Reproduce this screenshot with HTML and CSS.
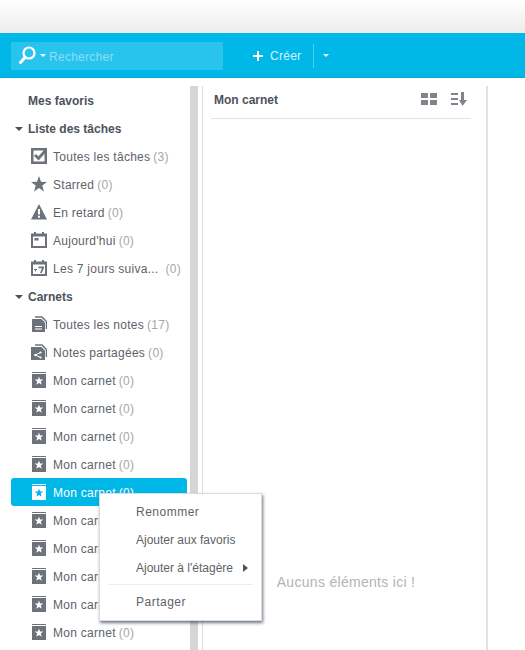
FILE: index.html
```html
<!DOCTYPE html>
<html lang="fr">
<head>
  <meta charset="UTF-8">
  <title>Mon carnet</title>
  <link rel="stylesheet" href="styles.css">
</head>
<body>
<svg class="defs" width="0" height="0">
  <symbol id="i-book" viewBox="0 0 16 16">
    <path d="M1 0h14v1H1zM1 2h14v14H1z" fill="currentColor"/>
    <path d="M8 4.500l1.100 3 3.200.1-2.500 2 .9 3.100L8 10.900l-2.700 1.800.9-3.100-2.500-2 3.200-.1z" fill="var(--star, #fff)"/>
  </symbol>
</svg>

<div class="topbar"></div>

<header class="appbar">
  <div class="search">
    <svg class="search-icon" width="17" height="19" viewBox="0 0 17 19"><circle cx="10" cy="7" r="5.500" fill="none" stroke="#fff" stroke-width="2.200"/><path d="M6 11.500L1.500 16.500" stroke="#fff" stroke-width="3" stroke-linecap="round"/></svg>
    <span class="caret caret-white"></span>
    <span class="search-text">Rechercher</span>
  </div>
  <div class="create">
    <svg width="10" height="10" viewBox="0 0 10 10"><path d="M4 0h2v4h4v2H6v4H4V6H0V4h4z" fill="#fff"/></svg>
    <span>Créer</span>
  </div>
  <span class="appbar-sep"></span>
  <span class="caret caret-white"></span>
</header>

<main class="layout">
  <aside class="sidebar">
    <nav class="tree">
      <div class="heading heading-plain">Mes favoris</div>

      <div class="heading"><span class="caret"></span>Liste des tâches</div>
      <div class="row">
        <svg class="ico" viewBox="0 0 16 16"><path d="M0 0h16v16H0z" fill="#6d727a"/><path d="M2.500 2.500h11v11h-11z" fill="#fff"/><path d="M4 7l3.500 3.500L14.500 2.500" fill="none" stroke="#6d727a" stroke-width="2.800"/></svg>
        <span class="label">Toutes les tâches</span><span class="count">(3)</span>
      </div>
      <div class="row">
        <svg class="ico" viewBox="0 0 16 16"><path d="M8 0l2 5.700 6 .2-4.700 3.700 1.700 5.900L8 12.100 3 15.500l1.700-5.900L0 5.900l6-.2z" fill="#6d727a"/></svg>
        <span class="label">Starred</span><span class="count">(0)</span>
      </div>
      <div class="row">
        <svg class="ico" viewBox="0 0 16 16"><path d="M8 0L16 15.500H0z" fill="#6d727a"/><path d="M7 5h2v5.500H7zM7 11.800h2v2H7z" fill="#fff"/></svg>
        <span class="label">En retard</span><span class="count">(0)</span>
      </div>
      <div class="row">
        <svg class="ico" viewBox="0 0 16 16"><path d="M3 0h2v1.500h6V0h2v1.500h3V16H0V1.500h3z" fill="#6d727a"/><path d="M2 4.500h12V14H2z" fill="#fff"/><path d="M3.500 6h4v2.500h-4z" fill="#6d727a"/></svg>
        <span class="label">Aujourd'hui</span><span class="count">(0)</span>
      </div>
      <div class="row">
        <svg class="ico" viewBox="0 0 16 16"><path d="M3 0h2v1.500h6V0h2v1.500h3V16H0V1.500h3z" fill="#6d727a"/><path d="M2 4.500h12V14H2z" fill="#fff"/><path d="M3 9h3v1H5v1.500H4V10H3zM7.500 6.500h5.500v1.500L10.800 13H9l2-4.800H7.500z" fill="#6d727a"/></svg>
        <span class="label label-cut">Les 7 jours suiva...</span><span class="count">(0)</span>
      </div>

      <div class="heading"><span class="caret"></span>Carnets</div>
      <div class="row">
        <svg class="ico" viewBox="0 0 16 16"><path d="M1 3h9.500L14 6.500V16H1z" fill="#6d727a"/><path d="M4 1h7l4.500 4.500V13" fill="none" stroke="#6d727a" stroke-width="1.500"/><path d="M4 10h7v1H4zM4 12.500h7v1H4z" fill="#fff"/></svg>
        <span class="label">Toutes les notes</span><span class="count">(17)</span>
      </div>
      <div class="row">
        <svg class="ico" viewBox="0 0 16 16"><path d="M0 3h10.500L14 6.500V16H0z" fill="#6d727a"/><path d="M4 1h7l4.500 4.500V13" fill="none" stroke="#6d727a" stroke-width="1.500"/><path d="M4.500 11l5-2.500M4.500 11l5 2.500" stroke="#fff" fill="none"/><circle cx="4.500" cy="11" r="1.300" fill="#fff"/><circle cx="9.500" cy="8.500" r="1.100" fill="#fff"/><circle cx="9.500" cy="13.500" r="1.100" fill="#fff"/></svg>
        <span class="label">Notes partagées</span><span class="count">(0)</span>
      </div>
      <div class="row"><svg class="ico book"><use href="#i-book"/></svg><span class="label">Mon carnet</span><span class="count">(0)</span></div>
      <div class="row"><svg class="ico book"><use href="#i-book"/></svg><span class="label">Mon carnet</span><span class="count">(0)</span></div>
      <div class="row"><svg class="ico book"><use href="#i-book"/></svg><span class="label">Mon carnet</span><span class="count">(0)</span></div>
      <div class="row"><svg class="ico book"><use href="#i-book"/></svg><span class="label">Mon carnet</span><span class="count">(0)</span></div>
      <div class="row row-active"><svg class="ico book"><use href="#i-book"/></svg><span class="label">Mon carnet</span><span class="count">(0)</span></div>
      <div class="row"><svg class="ico book"><use href="#i-book"/></svg><span class="label">Mon carnet</span><span class="count">(0)</span></div>
      <div class="row"><svg class="ico book"><use href="#i-book"/></svg><span class="label">Mon carnet</span><span class="count">(0)</span></div>
      <div class="row"><svg class="ico book"><use href="#i-book"/></svg><span class="label">Mon carnet</span><span class="count">(0)</span></div>
      <div class="row"><svg class="ico book"><use href="#i-book"/></svg><span class="label">Mon carnet</span><span class="count">(0)</span></div>
      <div class="row"><svg class="ico book"><use href="#i-book"/></svg><span class="label">Mon carnet</span><span class="count">(0)</span></div>
    </nav>
    <div class="scrollbar"></div>
  </aside>

  <section class="notes">
    <div class="notes-head">
      <span class="notes-title">Mon carnet</span>
      <svg class="tool" width="16" height="12" viewBox="0 0 16 12"><path d="M0 0h7v5H0zM9 0h7v5H9zM0 7h7v5H0zM9 7h7v5H9z" fill="#80848b"/></svg>
      <svg class="tool" width="16" height="14" viewBox="0 0 16 14"><path d="M0 1h7v2H0zM0 6h7v2H0zM0 11h7v2H0zM10 0h3v8h3l-4.500 6L8 8h2z" fill="#80848b"/></svg>
    </div>
    <p class="empty">Aucuns éléments ici !</p>
  </section>
</main>

<div class="menu">
  <div class="menu-item menu-wide">Renommer</div>
  <div class="menu-item">Ajouter aux favoris</div>
  <div class="menu-item">Ajouter à l'étagère<span class="menu-arrow"></span></div>
  <div class="menu-sep"></div>
  <div class="menu-item menu-wide">Partager</div>
</div>
</body>
</html>
```

FILE: styles.css
```css
html, body { height: 100%; }
body { margin: 0; overflow: hidden; background: #fff; color: #5d626a; font-family: "Liberation Sans", Arial, sans-serif; font-size: 12px; letter-spacing: 0.27px; }
.defs { display: block; height: 0; }

.topbar { height: 33px; background: linear-gradient(#fff, #ececed); }

.appbar { display: flex; align-items: center; height: 45px; padding-left: 11px; background: #00b8e8; box-shadow: inset 0 -1px 0 #00a9d6; color: #d6f3fc; }
.search { display: flex; align-items: center; width: 212px; height: 28px; background: #29c4ee; box-sizing: border-box; padding-left: 8px; }
.search-icon { margin-right: 4px; }
.search-text { margin-left: 3px; padding-top: 2px; color: #8fdcf5; }
.create { display: flex; align-items: center; gap: 7px; margin-left: 30px; }
.appbar-sep { width: 1px; height: 24px; margin: 0 9px 0 12px; background: #4ccdf0; }

.caret { display: inline-block; width: 0; height: 0; border: 4px solid transparent; border-top: 4px solid #4d525b; border-bottom: 0; }
.caret-white { border-width: 3px 3px 0; border-top-color: #fff; }

.layout { display: flex; height: 572px; padding-top: 8px; box-sizing: border-box; }

.sidebar { display: flex; width: 198px; flex: none; }
.tree { width: 190px; flex: none; overflow: hidden; }
.scrollbar { width: 8px; background: #d4d5d6; }

.heading { display: flex; align-items: center; height: 28px; padding: 2px 0 0 15px; box-sizing: border-box; font-weight: bold; letter-spacing: 0; color: #4d525b; }
.heading .caret { margin-right: 5px; }
.heading-plain { padding-left: 28px; }

.row { display: flex; align-items: center; width: 176px; height: 28px; margin-left: 11px; padding-left: 20px; box-sizing: border-box; border-radius: 3px; }
.label, .count { padding-top: 2px; }
.ico { width: 16px; height: 16px; flex: none; margin-right: 6px; }
.book { color: #6d727a; }
.count { margin-left: 3px; color: #a3a7ad; }
.label-cut { margin-right: 4px; }
.row-active { background: #00b8e8; color: #fff; --star: #00b8e8; }
.row-active .book { color: #fff; }
.row-active .count { color: #fff; }

.notes { width: 283px; flex: none; margin-left: 4px; border-left: 1px solid #dcdcdd; border-right: 2px solid #e2e2e3; }
.notes-head { display: flex; align-items: center; height: 26px; margin: 0 15px 0 8px; padding: 0 3px 6px; border-bottom: 1px solid #dce4ef; }
.notes-title { flex: 1; padding-top: 2px; font-weight: bold; letter-spacing: 0; color: #4d525b; }
.tool { margin-left: 14px; }
.tool:last-child { margin-right: 1px; }
.empty { margin: 453px 0 0 3px; text-align: center; font-size: 14px; line-height: 20px; letter-spacing: 0.3px; color: #b0b4b8; }

.menu { position: absolute; left: 99px; top: 493px; width: 163px; height: 128px; box-sizing: border-box; padding-top: 4px; background: #fff; border: 1px solid #d8dce0; box-shadow: 1px 2px 3px rgba(50, 60, 75, 0.7); letter-spacing: 0; }
.menu-item { display: flex; align-items: center; height: 28px; padding-left: 36px; white-space: pre; }
.menu-wide { letter-spacing: 0.5px; }
.menu-arrow { width: 0; height: 0; margin: 0 13px 0 auto; border: 4px solid transparent; border-left: 5px solid #4d525b; border-right: 0; }
.menu-sep { height: 1px; margin: 2px 8px 3px 8px; background: #e8edf2; }
```
